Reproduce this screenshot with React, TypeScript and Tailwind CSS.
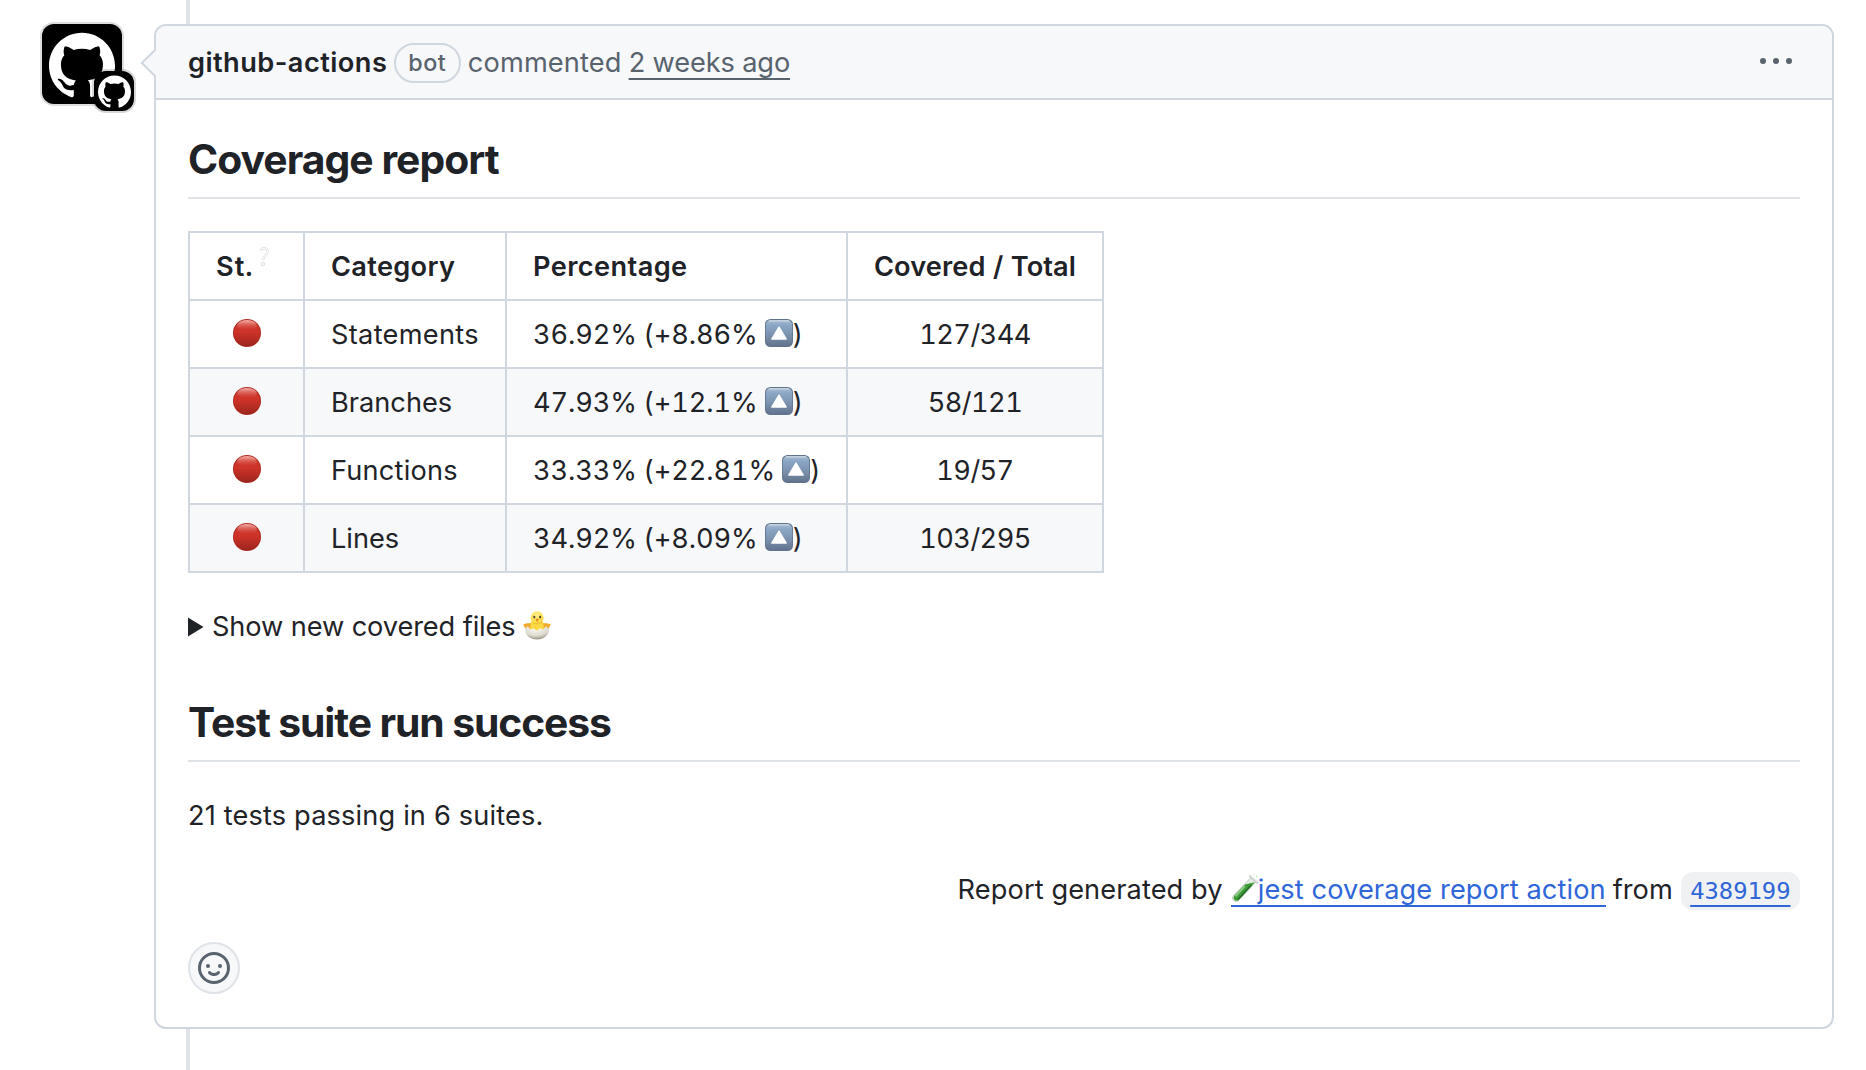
import { SiGithub } from "react-icons/si";

const rows = [
  { name: "Statements", track: "tracking-[0.3px]", value: "36.92%", delta: "(+8.86%", total: "127/344" },
  { name: "Branches", track: "tracking-[0px]", value: "47.93%", delta: "(+12.1%", total: "58/121" },
  { name: "Functions", track: "tracking-[0.2px]", value: "33.33%", delta: "(+22.81%", total: "19/57" },
  { name: "Lines", track: "tracking-[0px]", value: "34.92%", delta: "(+8.09%", total: "103/295" },
];

function RedCircle() {
  return (
    <svg className="relative -top-0.5 block" width="28" height="28" viewBox="0 0 28 28">
      <defs>
        <linearGradient id="red-body" x1="0" y1="0" x2="0" y2="1">
          <stop offset="0" stopColor="#c93a30" />
          <stop offset="0.45" stopColor="#cf3328" />
          <stop offset="1" stopColor="#9c251d" />
        </linearGradient>
        <linearGradient id="red-gloss" x1="0" y1="0" x2="0" y2="1">
          <stop offset="0" stopColor="#f4b3ad" />
          <stop offset="1" stopColor="#d8493f" stopOpacity="0" />
        </linearGradient>
      </defs>
      <circle cx="14" cy="14" r="14" fill="#a8291f" />
      <circle cx="14" cy="14" r="13.2" fill="url(#red-body)" />
      <ellipse cx="14" cy="6.2" rx="9.8" ry="5.2" fill="url(#red-gloss)" />
    </svg>
  );
}

function UpButton() {
  return (
    <svg className="relative -top-0.5 block" width="28" height="28" viewBox="0 0 28 28">
      <defs>
        <linearGradient id="up-body" x1="0" y1="0" x2="0" y2="1">
          <stop offset="0" stopColor="#a9bdd3" />
          <stop offset="0.2" stopColor="#8ba6c6" />
          <stop offset="0.5" stopColor="#7f97b4" />
          <stop offset="1" stopColor="#62748d" />
        </linearGradient>
      </defs>
      <rect width="28" height="28" rx="5.5" fill="#62748c" />
      <rect x="0.8" y="1" width="26.4" height="26" rx="5" fill="url(#up-body)" />
      <path d="M4.5 1.9h19" stroke="#cdd8e3" strokeWidth="1.4" strokeLinecap="round" />
      <path d="M14 8.2 21.2 20H6.8Z" fill="#fff" stroke="#fff" strokeWidth="1.4" strokeLinejoin="round" />
    </svg>
  );
}

function HatchingChick() {
  return (
    <svg className="relative -top-px block" width="28" height="29" viewBox="0 0 28 29">
      <defs>
        <radialGradient id="egg" cx="0.45" cy="0.2" r="0.85">
          <stop offset="0" stopColor="#fbf9f3" />
          <stop offset="0.6" stopColor="#dedad0" />
          <stop offset="1" stopColor="#8f897c" />
        </radialGradient>
        <radialGradient id="head" cx="0.45" cy="0.3" r="0.75">
          <stop offset="0" stopColor="#fff08a" />
          <stop offset="0.7" stopColor="#fbdc4c" />
          <stop offset="1" stopColor="#e9b52f" />
        </radialGradient>
      </defs>
      <path d="M3 18.500C1.800 16.500.6 14.800.2 12.700c1.300.4 2.400.2 3.200-.4 2-.2 3.800-.2 5.600-.9h10c1.800.7 3.600.7 5.600.9.8.6 1.900.8 3.200.4-.4 2.100-1.600 3.800-2.800 5.800Z" fill="#f0ab2c" />
      <path d="M8 10.500h12l1 9.500H7Z" fill="#fbd945" />
      <circle cx="14.100" cy="6.800" r="6.500" fill="url(#head)" />
      <ellipse cx="11.300" cy="6.100" rx="1" ry="1.300" fill="#4a3d28" />
      <ellipse cx="17.100" cy="6.100" rx="1" ry="1.300" fill="#4a3d28" />
      <path d="M12.300 8.600 14.200 7.500 16.100 8.600 14.200 11Z" fill="#ee8a22" />
      <path d="M2 17.500 4.800 15.200 7.600 18.600 10.200 17.200 13.800 19.800 17.200 17 20 18.800 22.800 15.200 26 17.500C26.300 24 21 28.500 14 28.500S1.700 24 2 17.500Z" fill="url(#egg)" />
    </svg>
  );
}

function TestTube() {
  return (
    <svg className="relative -top-0.5 block" width="28" height="28" viewBox="0 0 28 28">
      <path d="M20 3.500 25 8 8.200 26c-1.600 1.700-4 1.900-5.500.600-1.500-1.400-1.500-3.700.100-5.400Z" fill="#e3ebe2" stroke="#b4c0b3" strokeWidth="0.8" />
      <path d="M14 10.500 23.800 8.300 8 25.400c-1.300 1.400-3.300 1.700-4.500.600-1.300-1.100-1.200-3 .1-4.400Z" fill="#3f9a38" />
      <path d="M13.500 12.500 5 22" stroke="#93d389" strokeWidth="1.500" strokeLinecap="round" />
      <path d="M20 11.500 7 25.500" stroke="#1f6b22" strokeWidth="1.500" strokeLinecap="round" />
      <path d="M19.300 2.400 26.200 8.600" stroke="#c9cfca" strokeWidth="2.400" strokeLinecap="round" />
      <path d="M20.300 2.400 25.800 7.300" stroke="#f2f4f2" strokeWidth="1" strokeLinecap="round" />
      <circle cx="25.600" cy="2.200" r="0.8" fill="#a9dba2" />
      <circle cx="22.800" cy="0.900" r="0.600" fill="#c3e6be" />
    </svg>
  );
}

function HelpMark() {
  return (
    <svg className="block" width="10" height="20" viewBox="0 0 10 20">
      <path d="M1.300 4C1.600 2 3.200 1.400 5 1.400c2.400 0 3.800 1 3.600 3.200-.3 3.600-4.200 3.800-4.800 8.400" fill="none" stroke="#d4d4d4" strokeWidth="2.200" />
      <path d="M1.300 4C1.600 2 3.200 1.400 5 1.400c2.400 0 3.800 1 3.600 3.200-.3 3.600-4.200 3.800-4.800 8.400" fill="none" stroke="#fafafa" strokeWidth="1.400" />
      <circle cx="4" cy="17" r="1.800" fill="#f8f8f8" stroke="#cccccc" strokeWidth="0.600" />
    </svg>
  );
}

function Smiley() {
  return (
    <svg width="32" height="32" viewBox="0 0 16 16" fill="#59636e">
      <path d="M8 0a8 8 0 1 1 0 16A8 8 0 0 1 8 0ZM1.500 8a6.500 6.500 0 1 0 13 0 6.500 6.500 0 0 0-13 0Zm3.820 1.636a.75.75 0 0 1 1.038.175l.007.009c.103.118.220.222.350.310.264.178.683.370 1.285.370.602 0 1.020-.192 1.285-.371.130-.088.247-.192.350-.310l.007-.008a.75.75 0 0 1 1.222.870l-.022-.015c.02.013.021.015.021.015v.001l-.001.002-.002.003-.005.007-.014.019a2.066 2.066 0 0 1-.184.213c-.160.166-.338.316-.530.445-.630.418-1.370.638-2.127.629-.946 0-1.652-.308-2.126-.630a3.331 3.331 0 0 1-.715-.657l-.014-.020-.005-.006-.002-.003v-.002h-.001l.613-.432-.614.430a.75.75 0 0 1 .183-1.044ZM12 7a1 1 0 1 1-2 0 1 1 0 0 1 2 0ZM5 8a1 1 0 1 1 0-2 1 1 0 0 1 0 2Z" />
    </svg>
  );
}

function Avatar() {
  return (
    <div className="relative mt-6 ml-[42px] h-20 w-20 shrink-0 rounded-xl bg-black shadow-[0_0_0_2px_rgba(27,31,36,0.15)]">
      <SiGithub className="absolute top-2 left-[7px] text-white" size={66} />
      <div className="absolute top-[47px] left-[52px] flex h-10 w-10 items-center justify-center rounded-xl bg-black shadow-[0_0_0_2px_rgba(31,31,31,0.18)]">
        <SiGithub className="text-white" size={33} />
      </div>
    </div>
  );
}

function CommentHeader() {
  return (
    <header className="relative flex h-[74px] items-center rounded-t-[10px] border-b-2 border-[#d0d7de] bg-[#f6f8fa] px-8 whitespace-nowrap text-[#59636e]">
      <svg className="absolute top-[22px] -left-4" width="18" height="30" viewBox="0 0 18 30">
        <path d="M18 0.500 1.500 15 18 29.500Z" fill="#f6f8fa" />
        <path d="M15 2 1.800 15 15 28" fill="none" stroke="#d0d7de" strokeWidth="2" />
      </svg>
      <span className="pt-0.5 font-semibold tracking-[0.45px] text-[#1f2328]">github-actions</span>
      <span className="mt-0.5 ml-[6.500px] flex h-10 w-[67px] items-center justify-center rounded-full border-2 border-[#d0d7de] text-[23.300px] font-medium tracking-[0.5px]">
        bot
      </span>
      <span className="ml-[7px] pt-0.5 tracking-[0.15px]">commented</span>
      <a className="ml-[7px] pt-0.5 tracking-[-0.13px] underline decoration-2 underline-offset-[6px] [text-decoration-skip-ink:none]">
        2 weeks ago
      </a>
      <button className="mr-2 ml-auto flex gap-[7px] pb-0.5" aria-label="Show options">
        <i className="h-1.5 w-1.5 rounded-full bg-[#59636e]" />
        <i className="h-1.5 w-1.5 rounded-full bg-[#59636e]" />
        <i className="h-1.5 w-1.5 rounded-full bg-[#59636e]" />
      </button>
    </header>
  );
}

const cell = "h-[68px] border-r-2 border-b-2 border-[#d0d7de] p-0 pt-0.5";

function CoverageTable() {
  return (
    <table className="mt-8 w-[916px] table-fixed border-separate border-spacing-0 border-t-2 border-l-2 border-[#d0d7de] whitespace-nowrap tabular-nums">
      <colgroup>
        <col className="w-[115px]" />
        <col className="w-[202px]" />
        <col className="w-[341px]" />
        <col className="w-[256px]" />
      </colgroup>
      <thead>
        <tr className="text-left">
          <th className={cell}>
            <div className="flex items-center pl-[26px] font-semibold tracking-[1px]">
              St.
              <span className="mb-5 ml-[5px]">
                <HelpMark />
              </span>
            </div>
          </th>
          <th className={cell + " pl-[26px]! font-semibold tracking-[0.3px]"}>Category</th>
          <th className={cell + " pl-[26px]! font-semibold tracking-[0.4px]"}>Percentage</th>
          <th className={cell + " text-center font-semibold tracking-[0.1px]"}>Covered / Total</th>
        </tr>
      </thead>
      <tbody>
        {rows.map((r) => (
          <tr key={r.name} className="even:bg-[#f6f8fa]">
            <td className={cell}>
              <div className="flex justify-center pl-px">
                <RedCircle />
              </div>
            </td>
            <td className={cell + " pl-[26px]! " + r.track}>{r.name}</td>
            <td className={cell}>
              <div className="flex items-center pl-[26px]">
                <span className="tracking-[-0.1px] [word-spacing:-1px]">
                  {r.value} {r.delta}
                </span>
                <span className="ml-[7px]">
                  <UpButton />
                </span>
                <span>)</span>
              </div>
            </td>
            <td className={cell + " text-center tracking-[-0.6px]"}>{r.total}</td>
          </tr>
        ))}
      </tbody>
    </table>
  );
}

export default function App() {
  return (
    <div className="relative flex h-[1070px] w-[1866px] overflow-hidden bg-white font-['Inter',sans-serif] text-[27.200px] leading-[42px] text-[#1f2328]">
      <div className="absolute inset-y-0 left-[186px] w-1 bg-[#dfe3e8]" />
      <Avatar />
      <article className="relative mt-6 ml-8 h-[1005px] w-[1680px] rounded-xl border-2 border-[#d0d7de] bg-white">
        <CommentHeader />
        <div className="px-8 pt-8">
          <h2 className="border-b-2 border-[#dfe3e8] pt-px pb-3 text-[40.800px] leading-[52px] font-[650] tracking-[-0.95px]">
            Coverage report
          </h2>
          <CoverageTable />
          <div className="mt-8 flex h-[42px] items-center whitespace-nowrap">
            <svg className="mt-0.5" width="16" height="20" viewBox="0 0 16 20">
              <path d="M0 0.500 15.500 10 0 19.500Z" fill="#1f2328" />
            </svg>
            <span className="ml-2 pt-0.5 tracking-[-0.1px]">Show new covered files</span>
            <span className="ml-[7px]">
              <HatchingChick />
            </span>
          </div>
          <h2 className="mt-[49px] border-b-2 border-[#dfe3e8] pb-3 text-[40.800px] leading-[52px] font-[650] tracking-[-1.1px]">
            Test suite run success
          </h2>
          <p className="mt-[33px] tracking-[0.15px]">21 tests passing in 6 suites.</p>
          <div className="mt-[31px] flex h-[42px] items-center justify-end whitespace-nowrap">
            <span className="pt-0.5 tracking-[0.1px]">Report generated by</span>
            <a className="ml-2 flex h-9 items-center border-b-2 border-[#2f66d8] pt-1 text-[#2f66d8]">
              <TestTube />
              <span className="-ml-px tracking-[0.1px]">jest coverage report action</span>
            </a>
            <span className="ml-[7px] pt-0.5">from</span>
            <code className="mt-1 ml-2 flex h-[38px] items-center rounded-xl bg-[#eff1f3] px-[9.500px] font-['DejaVu_Sans_Mono',monospace] text-[23.800px]">
              <a className="text-[#2f66d8] underline decoration-2 underline-offset-[6px] [text-decoration-skip-ink:none]">
                4389199
              </a>
            </code>
          </div>
          <button className="mt-8 flex h-[52px] w-[52px] items-center justify-center rounded-full border-2 border-[#dfe3e8] bg-[#f6f8fa]" aria-label="Add reaction">
            <Smiley />
          </button>
        </div>
      </article>
    </div>
  );
}
